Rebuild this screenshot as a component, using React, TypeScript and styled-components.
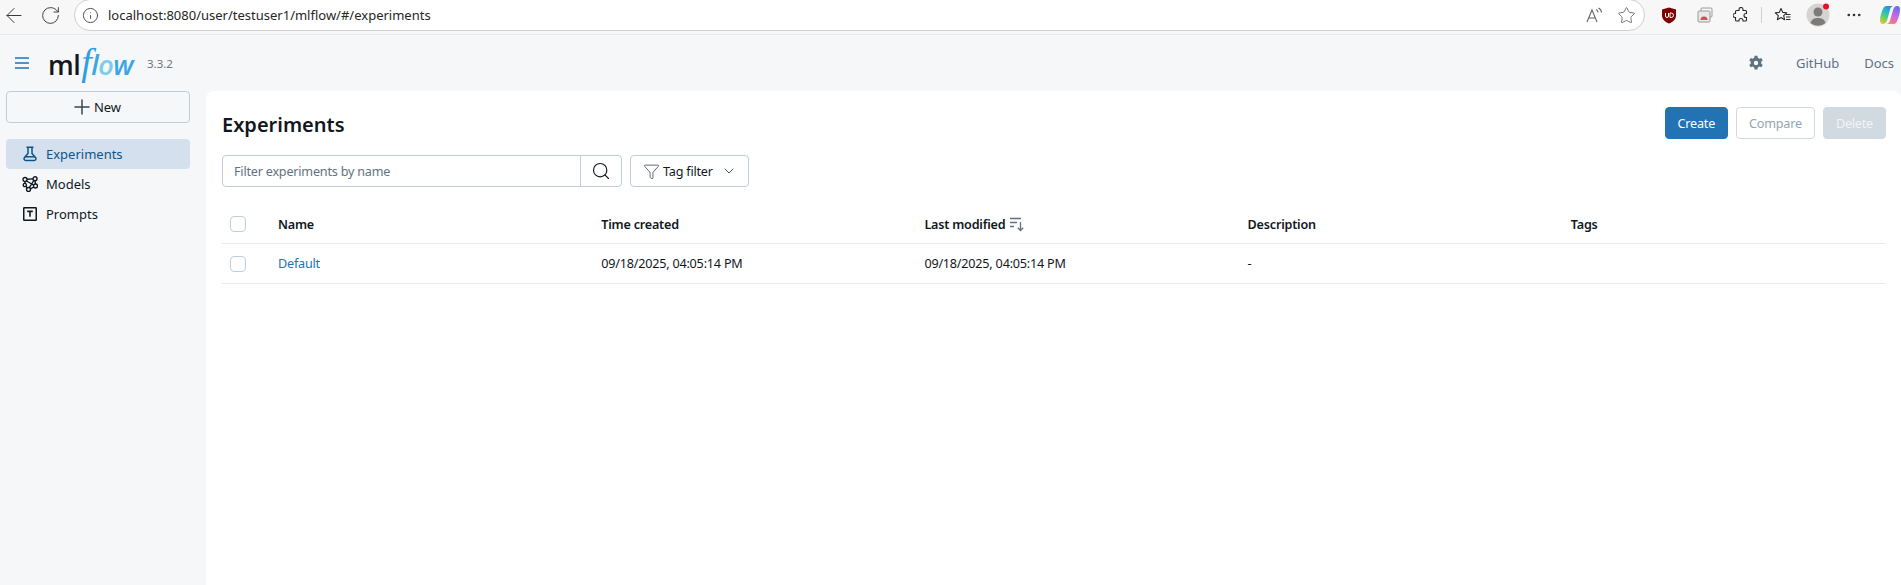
import React from 'react';
import styled, { createGlobalStyle } from 'styled-components';
import { Plus, Search, ChevronDown, Filter, ArrowLeft, RotateCw, Info, Star, MoreHorizontal } from 'lucide-react';

const GlobalStyle = createGlobalStyle`
  html, body {
    margin: 0;
    height: 100%;
    overflow: hidden;
    background: #f6f7f9;
  }
  body {
    font-family: "Noto Sans", "Open Sans", sans-serif;
    font-size: 13px;
    color: #11171c;
  }
  * { box-sizing: border-box; }
`;

const Page = styled.div`
  width: 1901px;
  height: 585px;
  display: flex;
  flex-direction: column;
  overflow: hidden;
`;

const BrowserBar = styled.div`
  height: 35px;
  flex: none;
  display: flex;
  align-items: flex-start;
  padding-left: 2px;
  background: #f7f7f7;
  border-bottom: 1px solid #e9e9e9;
`;

const BrowserButton = styled.div<{ $width: number }>`
  width: ${(p) => p.$width}px;
  height: 30px;
  flex: none;
  display: flex;
  align-items: center;
  justify-content: center;
  color: #3a3a3a;
`;

const AddressBar = styled.div`
  width: 1571px;
  height: 32px;
  margin-top: -1px;
  flex: none;
  display: flex;
  align-items: center;
  padding: 0 8px 0 7px;
  background: #fff;
  border: 1px solid #d0d0d0;
  border-radius: 16px;
`;

const AddressText = styled.span`
  margin-left: 9px;
  font-size: 13px;
  color: #262626;
  flex: 1;
`;

const AddressIcons = styled.div`
  display: flex;
  align-items: center;
  gap: 14px;
  color: #555;
`;

const Extensions = styled.div`
  display: flex;
  flex: none;
  align-items: center;
  height: 30px;
`;

const AppHeader = styled.header`
  height: 56px;
  flex: none;
  display: flex;
  align-items: center;
  padding: 0 7px 0 15px;
`;

const MenuButton = styled.div`
  display: flex;
  margin-right: 19px;
`;

const Logo = styled.div`
  width: 88px;
  display: flex;
  align-items: baseline;
  font-family: "Open Sans", sans-serif;
  font-size: 27px;
  line-height: 1;
  letter-spacing: -0.5px;
`;

const LogoMl = styled.span`
  font-weight: 600;
  color: #14181d;
`;

const LogoF = styled.span`
  font-family: "Liberation Serif", serif;
  font-style: italic;
  font-size: 38px;
  line-height: 27px;
  color: #2f9fe4;
  margin-left: 1px;
`;

const LogoFlow = styled.span<{ $light?: boolean }>`
  font-style: italic;
  font-weight: 600;
  color: ${(p) => (p.$light ? '#7cccec' : '#3aa6e4')};
`;

const Version = styled.span`
  margin-left: 11px;
  font-size: 11.5px;
  color: #6b7680;
`;

const HeaderRight = styled.div`
  margin-left: auto;
  display: flex;
  align-items: center;
  color: #5f7281;
`;

const HeaderLink = styled.span<{ $gap: number }>`
  margin-left: ${(p) => p.$gap}px;
  font-size: 13px;
  color: #5f7281;
`;

const Body = styled.div`
  flex: 1;
  display: flex;
  min-height: 0;
`;

const Sidebar = styled.aside`
  width: 206px;
  flex: none;
  padding: 0 16px 0 6px;
`;

const NewButton = styled.div`
  height: 32px;
  display: flex;
  align-items: center;
  justify-content: center;
  font-size: 13px;
  color: #11171c;
  border: 1px solid #c0cdd8;
  border-radius: 4px;
`;

const NewIcon = styled.span`
  display: flex;
  margin: 0 0 0 -5px;
  color: #3a444d;
`;

const NavList = styled.nav`
  margin-top: 16px;
  display: flex;
  flex-direction: column;
`;

const NavItem = styled.div<{ $active?: boolean }>`
  height: 30px;
  display: flex;
  align-items: center;
  gap: 8px;
  padding-left: 16px;
  font-size: 13px;
  border-radius: 4px;
  color: ${(p) => (p.$active ? '#0e538b' : '#11171c')};
  background: ${(p) => (p.$active ? '#d4e0ed' : 'transparent')};
`;

const Main = styled.main`
  flex: 1;
  background: #fff;
  border-radius: 8px 8px 0 0;
  padding: 16px 15px 0 16px;
`;

const TitleRow = styled.div`
  height: 32px;
  display: flex;
  align-items: center;
  justify-content: space-between;
`;

const Title = styled.h1`
  margin: 0;
  padding-top: 3px;
  font-size: 20px;
  font-weight: 600;
  line-height: 32px;
  color: #11171c;
`;

const Actions = styled.div`
  display: flex;
  gap: 8px;
`;

const ActionButton = styled.div<{ $variant: 'primary' | 'outline' | 'disabled' }>`
  height: 32px;
  padding: 0 12px;
  display: flex;
  align-items: center;
  font-size: 12.6px;
  letter-spacing: -0.2px;
  border-radius: 4px;
  border: 1px solid ${(p) => (p.$variant === 'primary' ? '#2272b4' : '#d1d9e1')};
  background: ${(p) => (p.$variant === 'primary' ? '#2272b4' : p.$variant === 'outline' ? '#fff' : '#d1d9e1')};
  color: ${(p) => (p.$variant === 'primary' ? '#fff' : p.$variant === 'outline' ? '#92a4b3' : '#f2f5f7')};
`;

const FilterRow = styled.div`
  margin-top: 16px;
  display: flex;
  gap: 8px;
`;

const SearchGroup = styled.div`
  width: 400px;
  height: 32px;
  display: flex;
  border: 1px solid #c0cdd8;
  border-radius: 4px;
`;

const SearchField = styled.div`
  flex: 1;
  display: flex;
  align-items: center;
  padding-left: 11px;
  font-size: 12.6px;
  letter-spacing: -0.2px;
  color: #5f7281;
`;

const SearchButton = styled.div`
  width: 41px;
  display: flex;
  align-items: center;
  justify-content: center;
  color: #11171c;
  border-left: 1px solid #c0cdd8;
`;

const TagFilter = styled.div`
  width: 119px;
  height: 32px;
  display: flex;
  align-items: center;
  padding-left: 12px;
  font-size: 12.6px;
  letter-spacing: -0.2px;
  color: #11171c;
  border: 1px solid #c0cdd8;
  border-radius: 4px;
`;

const TagIcon = styled.span`
  display: flex;
  color: #44525e;
  margin-right: 3px;
`;

const TagCaret = styled.span`
  display: flex;
  color: #44525e;
  margin-left: 8px;
`;

const Table = styled.div`
  margin-top: 22px;
`;

const Row = styled.div<{ $header?: boolean }>`
  display: grid;
  grid-template-columns: 56px 323.2px 323.2px 323.2px 323.2px 1fr;
  align-items: center;
  height: ${(p) => (p.$header ? 35 : 40)}px;
  padding-bottom: ${(p) => (p.$header ? 4 : 0)}px;
  border-bottom: 1px solid #e8ecf0;
  font-size: 12.6px;
  letter-spacing: -0.2px;
  font-weight: ${(p) => (p.$header ? 600 : 400)};
  color: #11171c;
`;

const CheckCell = styled.div`
  padding-left: 8px;
  display: flex;
`;

const Checkbox = styled.span`
  width: 16px;
  height: 16px;
  border: 1px solid #c0cdd8;
  border-radius: 4px;
  background: #fff;
`;

const SortCell = styled.div`
  display: flex;
  align-items: center;
  gap: 4px;
  color: #5f7281;
`;

const SortLabel = styled.span`
  color: #11171c;
`;

const NameLink = styled.span`
  color: #2272b4;
`;

const Divider = styled.span`
  width: 1px;
  height: 16px;
  background: #cfcfcf;
`;

const ExtSlot = styled.div<{ $width: number; $offset?: number }>`
  width: ${(p) => p.$width}px;
  margin-left: ${(p) => p.$offset ?? 0}px;
  flex: none;
  display: flex;
  justify-content: center;
  align-items: center;
  color: #2a2a2a;
`;

const MenuIcon = () => (
  <svg width="14" height="12" viewBox="0 0 14 12" fill="none" stroke="#2272b4" strokeWidth="1.5">
    <path d="M0 1h14M0 6h14M0 11h14" />
  </svg>
);

const FlaskIcon = () => (
  <svg width="16" height="16" viewBox="0 0 16 16" fill="none" stroke="#0e538b" strokeWidth="1.5">
    <path d="M4.500 1.250h7M6 1.250v6.250L2.500 11.500c-1 1.300-.3 3 1.300 3h8.400c1.600 0 2.300-1.700 1.300-3L10 7.500V1.250" strokeLinejoin="round" />
    <path d="M3 10.800h10" />
  </svg>
);

const ModelsIcon = () => (
  <svg width="16" height="16" viewBox="0 0 16 16" fill="none" stroke="#11171c" strokeWidth="1.4">
    <circle cx="3" cy="3.500" r="2" />
    <circle cx="13" cy="2.800" r="2" />
    <circle cx="2.800" cy="9" r="1.600" />
    <circle cx="6.500" cy="13.500" r="2" />
    <circle cx="13.500" cy="10" r="2" />
    <path d="M5 3.300l6-.4M4.500 5l7 4M11.800 4.500L7.400 11.700M3 5.500V7.400M3.900 10.300L5.200 12M8.400 12.800l3.400-1.800M13.100 4.800l.3 3.200" />
  </svg>
);

const PromptsIcon = () => (
  <svg width="16" height="16" viewBox="0 0 16 16" fill="none" stroke="#11171c">
    <rect x="1.75" y="1.75" width="12.5" height="12.5" rx="0.6" strokeWidth="1.5" />
    <path d="M5.2 5.4h5.6M8 5.4v5.4" strokeWidth="1.6" />
  </svg>
);

const GearIcon = () => (
  <svg width="16" height="16" viewBox="0 0 16 16" fill="#5f7281">
    <path
      fillRule="evenodd"
      d="M6.6.8h2.8l.4 2 1.5.9 2-.7 1.4 2.4-1.5 1.4v1.7l1.5 1.4-1.4 2.4-2-.7-1.5.9-.4 2H6.600l-.4-2-1.5-.9-2 .7L1.3 10l1.5-1.4V6.800L1.3 5.400l1.4-2.400 2 .7 1.500-.9zM8 5.800a2 2 0 1 0 0 4.400 2 2 0 0 0 0-4.400z"
    />
  </svg>
);

const SortIcon = () => (
  <svg width="16" height="16" viewBox="0 0 16 16" fill="none" stroke="#5f7281" strokeWidth="1.3">
    <path d="M1 2.5h11M1 6.5h7M1 10.5h4M11.5 6v8.5M8.8 11.8l2.7 2.7 2.7-2.7" />
  </svg>
);

const ReadAloudIcon = () => (
  <svg width="17" height="17" viewBox="0 0 17 17" fill="none" stroke="#666" strokeWidth="1.1">
    <path d="M1 15L6 3l5 12M2.800 11h6.400" />
    <path d="M10 2.500c1.300.7 2 1.700 2 3M12.500 1c1.900 1 3 2.500 3 4.500" />
  </svg>
);

const UblockIcon = () => (
  <svg width="16" height="17" viewBox="0 0 16 17">
    <path d="M8 .5l7 2v6c0 4-3.5 6.800-7 8-3.500-1.200-7-4-7-8v-6z" fill="#800000" />
    <path d="M4.500 6v3a1.500 1.500 0 0 0 3 0V6M9 6v4.500h1.200a2.200 2.200 0 0 0 0-4.500z" fill="none" stroke="#fff" strokeWidth="1" />
  </svg>
);

const TabsIcon = () => (
  <svg width="16" height="16" viewBox="0 0 16 16">
    <rect x="4" y="1" width="11" height="9" rx="1" fill="none" stroke="#9a9a9a" />
    <rect x="1" y="4" width="12" height="11" rx="1" fill="#e8e8e8" stroke="#9a9a9a" />
    <path d="M3.500 13a3.500 3.500 0 0 1 7 0z" fill="#e0483c" />
    <path d="M5.500 13a1.500 1.500 0 0 1 3 0z" fill="#4a90e2" />
  </svg>
);

const PuzzleIcon = () => (
  <svg width="16" height="16" viewBox="0 0 16 16" fill="none" stroke="#2a2a2a" strokeWidth="1.1">
    <path d="M6 2.500a2 2 0 0 1 4 0V3.500h2.500a1 1 0 0 1 1 1V6.500h-.5a2 2 0 0 0 0 4h.5v2.500a1 1 0 0 1-1 1H10v-.5a2 2 0 0 0-4 0v.5H3.500a1 1 0 0 1-1-1V10.500H2a2 2 0 0 1 0-4h.5V4.500a1 1 0 0 1 1-1H6z" />
  </svg>
);

const FavoritesIcon = () => (
  <svg width="17" height="16" viewBox="0 0 17 16" fill="none" stroke="#2a2a2a" strokeWidth="1.1">
    <path d="M7 1.500l1.700 3.900 4 .4-3 2.800.9 4.100L7 10.600l-3.600 2.100.9-4.100-3-2.800 4-.4zM12 7.500h4.500M12 10h4.500M12 12.500h4.500" strokeLinejoin="round" />
  </svg>
);

const AvatarIcon = () => (
  <svg width="24" height="24" viewBox="0 0 24 24">
    <circle cx="12" cy="12" r="11.500" fill="#d6d4d2" />
    <circle cx="12" cy="9" r="4.500" fill="#7d7b79" />
    <path d="M4.500 20c1-4 4-5 7.500-5s6.500 1 7.500 5a11.500 11.500 0 0 1-15 0z" fill="#7d7b79" />
    <circle cx="20" cy="3.500" r="3" fill="#e81123" />
  </svg>
);

const CopilotIcon = () => (
  <svg width="20" height="20" viewBox="0 0 20 20">
    <defs>
      <linearGradient id="copilotLeft" x1="0.7" y1="0" x2="0.2" y2="1">
        <stop offset="0" stopColor="#1f8fe0" />
        <stop offset="0.45" stopColor="#2fc4b0" />
        <stop offset="0.8" stopColor="#8fd14a" />
        <stop offset="1" stopColor="#f2c230" />
      </linearGradient>
      <linearGradient id="copilotRight" x1="0.7" y1="0" x2="0.3" y2="1">
        <stop offset="0" stopColor="#6a6cf0" />
        <stop offset="0.5" stopColor="#c56ae0" />
        <stop offset="0.85" stopColor="#f2709c" />
        <stop offset="1" stopColor="#f7a03c" />
      </linearGradient>
    </defs>
    <path d="M6.500 1H14c-2 0-3.300 1.200-3.900 3.200L7.300 14.800C6.700 17 5.300 19 3 19H2.500C1 19 0 17.500 0 15.500 0 11 1.800 6.300 3.300 3.300 4.100 1.800 5.200 1 6.500 1z" fill="url(#copilotLeft)" />
    <path d="M13.500 19H6c2 0 3.300-1.200 3.900-3.200l3.100-10.600C13.600 3 15 1 17 1h.5C19 1 20 2.500 20 4.500c0 4.500-1.800 9.200-3.300 12.200-.8 1.500-1.900 2.300-3.200 2.300z" fill="url(#copilotRight)" />
  </svg>
);

export default function App() {
  return (
    <Page>
      <GlobalStyle />
      <BrowserBar>
        <BrowserButton $width={24}>
          <ArrowLeft size={27} strokeWidth={1} />
        </BrowserButton>
        <BrowserButton $width={48}>
          <RotateCw size={21} strokeWidth={1.1} />
        </BrowserButton>
        <AddressBar>
          <Info size={17} strokeWidth={1.3} color="#444" />
          <AddressText>localhost:8080/user/testuser1/mlflow/#/experiments</AddressText>
          <AddressIcons>
            <ReadAloudIcon />
            <Star size={19} strokeWidth={1} />
          </AddressIcons>
        </AddressBar>
        <Extensions>
          <ExtSlot $width={48}><UblockIcon /></ExtSlot>
          <ExtSlot $width={24}><TabsIcon /></ExtSlot>
          <ExtSlot $width={40} $offset={4}><PuzzleIcon /></ExtSlot>
          <Divider />
          <ExtSlot $width={40}><FavoritesIcon /></ExtSlot>
          <ExtSlot $width={32}><AvatarIcon /></ExtSlot>
          <ExtSlot $width={40}><MoreHorizontal size={18} strokeWidth={1.5} /></ExtSlot>
          <ExtSlot $width={32}><CopilotIcon /></ExtSlot>
        </Extensions>
      </BrowserBar>
      <AppHeader>
        <MenuButton>
          <MenuIcon />
        </MenuButton>
        <Logo>
          <LogoMl>ml</LogoMl>
          <LogoF>f</LogoF>
          <LogoFlow>l</LogoFlow>
          <LogoFlow $light>o</LogoFlow>
          <LogoFlow>w</LogoFlow>
        </Logo>
        <Version>3.3.2</Version>
        <HeaderRight>
          <GearIcon />
          <HeaderLink $gap={32}>GitHub</HeaderLink>
          <HeaderLink $gap={25}>Docs</HeaderLink>
        </HeaderRight>
      </AppHeader>
      <Body>
        <Sidebar>
          <NewButton>
            <NewIcon><Plus size={24} strokeWidth={1.5} /></NewIcon>
            New
          </NewButton>
          <NavList>
            <NavItem $active><FlaskIcon />Experiments</NavItem>
            <NavItem><ModelsIcon />Models</NavItem>
            <NavItem><PromptsIcon />Prompts</NavItem>
          </NavList>
        </Sidebar>
        <Main>
          <TitleRow>
            <Title>Experiments</Title>
            <Actions>
              <ActionButton $variant="primary">Create</ActionButton>
              <ActionButton $variant="outline">Compare</ActionButton>
              <ActionButton $variant="disabled">Delete</ActionButton>
            </Actions>
          </TitleRow>
          <FilterRow>
            <SearchGroup>
              <SearchField>Filter experiments by name</SearchField>
              <SearchButton>
                <Search size={20} strokeWidth={1.4} />
              </SearchButton>
            </SearchGroup>
            <TagFilter>
              <TagIcon><Filter size={17} strokeWidth={1.2} /></TagIcon>
              Tag filter
              <TagCaret><ChevronDown size={16} strokeWidth={1.5} /></TagCaret>
            </TagFilter>
          </FilterRow>
          <Table>
            <Row $header>
              <CheckCell><Checkbox /></CheckCell>
              <div>Name</div>
              <div>Time created</div>
              <SortCell><SortLabel>Last modified</SortLabel><SortIcon /></SortCell>
              <div>Description</div>
              <div>Tags</div>
            </Row>
            <Row>
              <CheckCell><Checkbox /></CheckCell>
              <NameLink>Default</NameLink>
              <div>09/18/2025, 04:05:14 PM</div>
              <div>09/18/2025, 04:05:14 PM</div>
              <div>-</div>
              <div />
            </Row>
          </Table>
        </Main>
      </Body>
    </Page>
  );
}
